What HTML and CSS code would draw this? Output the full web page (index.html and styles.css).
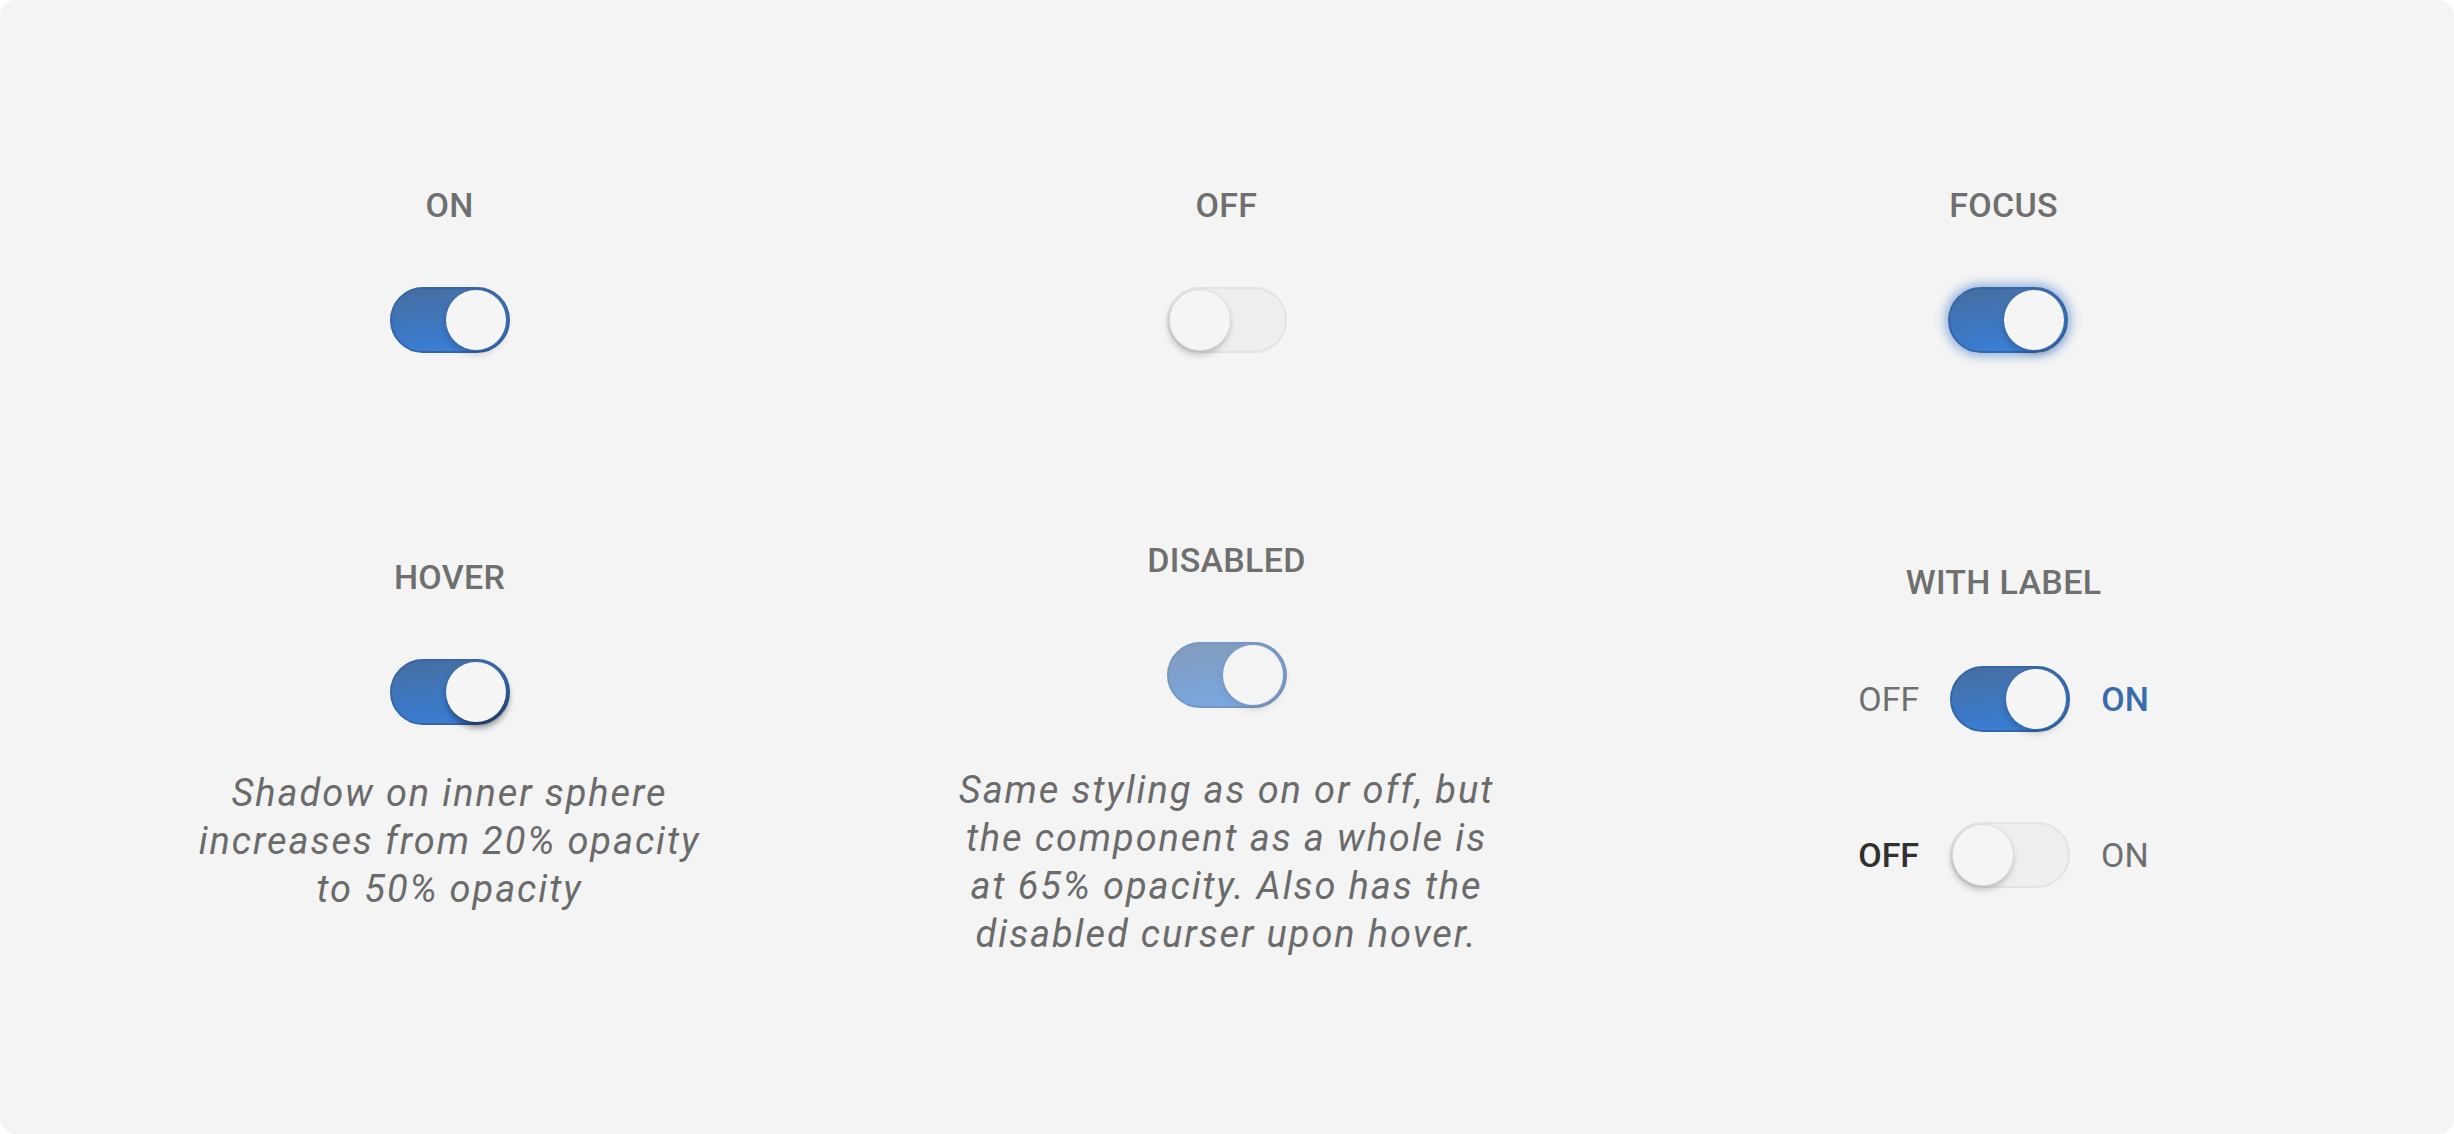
FILE: index.html
```html
<!DOCTYPE html>
<html lang="en">
<head>
<meta charset="utf-8">
<title>Toggle states</title>
<link rel="stylesheet" href="styles.css">
</head>
<body>
<main class="card">
  <section class="row row-top">
    <div class="cell">
      <h2 class="title">ON</h2>
      <span class="toggle is-on"><span class="knob"></span></span>
    </div>
    <div class="cell">
      <h2 class="title">OFF</h2>
      <span class="toggle is-off"><span class="knob"></span></span>
    </div>
    <div class="cell">
      <h2 class="title">FOCUS</h2>
      <span class="toggle is-on is-focus"><span class="knob"></span></span>
    </div>
  </section>
  <section class="row row-bottom">
    <div class="cell cell-hover">
      <h2 class="title">HOVER</h2>
      <span class="toggle is-on is-hover"><span class="knob"></span></span>
      <p class="note note-hover">Shadow on inner sphere<br>increases from 20% opacity<br>to 50% opacity</p>
    </div>
    <div class="cell cell-disabled">
      <h2 class="title">DISABLED</h2>
      <span class="toggle is-on is-disabled"><span class="knob"></span></span>
      <p class="note note-disabled">Same styling as on or off, but<br>the component as a whole is<br>at 65% opacity. Also has the<br>disabled curser upon hover.</p>
    </div>
    <div class="cell cell-label">
      <h2 class="title title-label">WITH LABEL</h2>
      <div class="labelled">
        <span class="side">OFF</span>
        <span class="toggle is-on"><span class="knob"></span></span>
        <span class="side side-active-on">ON</span>
      </div>
      <div class="labelled labelled-second">
        <span class="side side-active-off">OFF</span>
        <span class="toggle is-off"><span class="knob"></span></span>
        <span class="side">ON</span>
      </div>
    </div>
  </section>
</main>
</body>
</html>
```
FILE: styles.css
```css
* { box-sizing: border-box; }

html, body {
  margin: 0;
  background: #ffffff;
}

body {
  font-family: Roboto, "Noto Sans", "Liberation Sans", sans-serif;
  color: #6f6f6f;
}

.card {
  width: 2454px;
  height: 1134px;
  background: #f4f4f4;
  border-radius: 16px;
  padding: 185px 62px 0 61px;
  display: flex;
  flex-direction: column;
}

.row {
  display: grid;
  grid-template-columns: repeat(3, 1fr);
  align-items: start;
}

.row-bottom {
  margin-top: 187px;
}

.cell {
  display: flex;
  flex-direction: column;
  align-items: center;
}

.cell-hover { padding-top: 17px; }
.cell-label { padding-top: 22px; }

.title {
  margin: 0 0 62px;
  font-size: 34px;
  line-height: 40px;
  font-weight: 500;
  color: #6f6f6f;
  letter-spacing: 0.3px;
}

.title-label {
  margin-bottom: 64px;
}

/* toggle */
.toggle {
  display: flex;
  align-items: center;
  width: 120px;
  height: 66px;
  border-radius: 33px;
  padding: 0 2px;
  flex: none;
}

.toggle .knob {
  width: 60px;
  height: 60px;
  border-radius: 50%;
  background: #f5f5f5;
}

.is-on {
  justify-content: flex-end;
  background: linear-gradient(172deg, #476e9e 0%, #3c78c4 60%, #3a80d9 100%);
  border: 2px solid #3466a9;
}

.is-on .knob {
  box-shadow: 0 4px 7px rgba(0, 0, 0, 0.2);
}

.is-off {
  justify-content: flex-start;
  background: #eeeeee;
  border: 2px solid #e3e3e3;
  padding: 0;
}

.is-off .knob {
  width: 62px;
  height: 62px;
  border: 1px solid #dcdcdc;
  box-shadow: -1px 4px 6px rgba(0, 0, 0, 0.2);
}

.is-focus {
  margin-left: 8px;
  box-shadow: 0 0 10px 4px rgba(52, 110, 200, 0.45);
}

.is-hover .knob {
  box-shadow: 2px 5px 7px rgba(0, 0, 0, 0.5);
}

.is-disabled {
  opacity: 0.65;
  cursor: not-allowed;
}

/* notes */
.note {
  margin: 0;
  font-style: italic;
  font-size: 38px;
  line-height: 48px;
  letter-spacing: 1.9px;
  text-align: center;
  color: #6b6b6b;
}

.note-hover { margin-top: 44px; }
.note-disabled { margin-top: 58px; }

/* labelled toggles */
.labelled {
  display: flex;
  align-items: center;
  gap: 31px;
}

.labelled-second {
  margin-top: 90px;
}

.side {
  font-size: 34px;
  line-height: 40px;
  font-weight: 400;
  color: #6f6f6f;
}

.side-active-on {
  font-weight: 500;
  color: #3a6cad;
}

.side-active-off {
  font-weight: 500;
  color: #303030;
}
```
